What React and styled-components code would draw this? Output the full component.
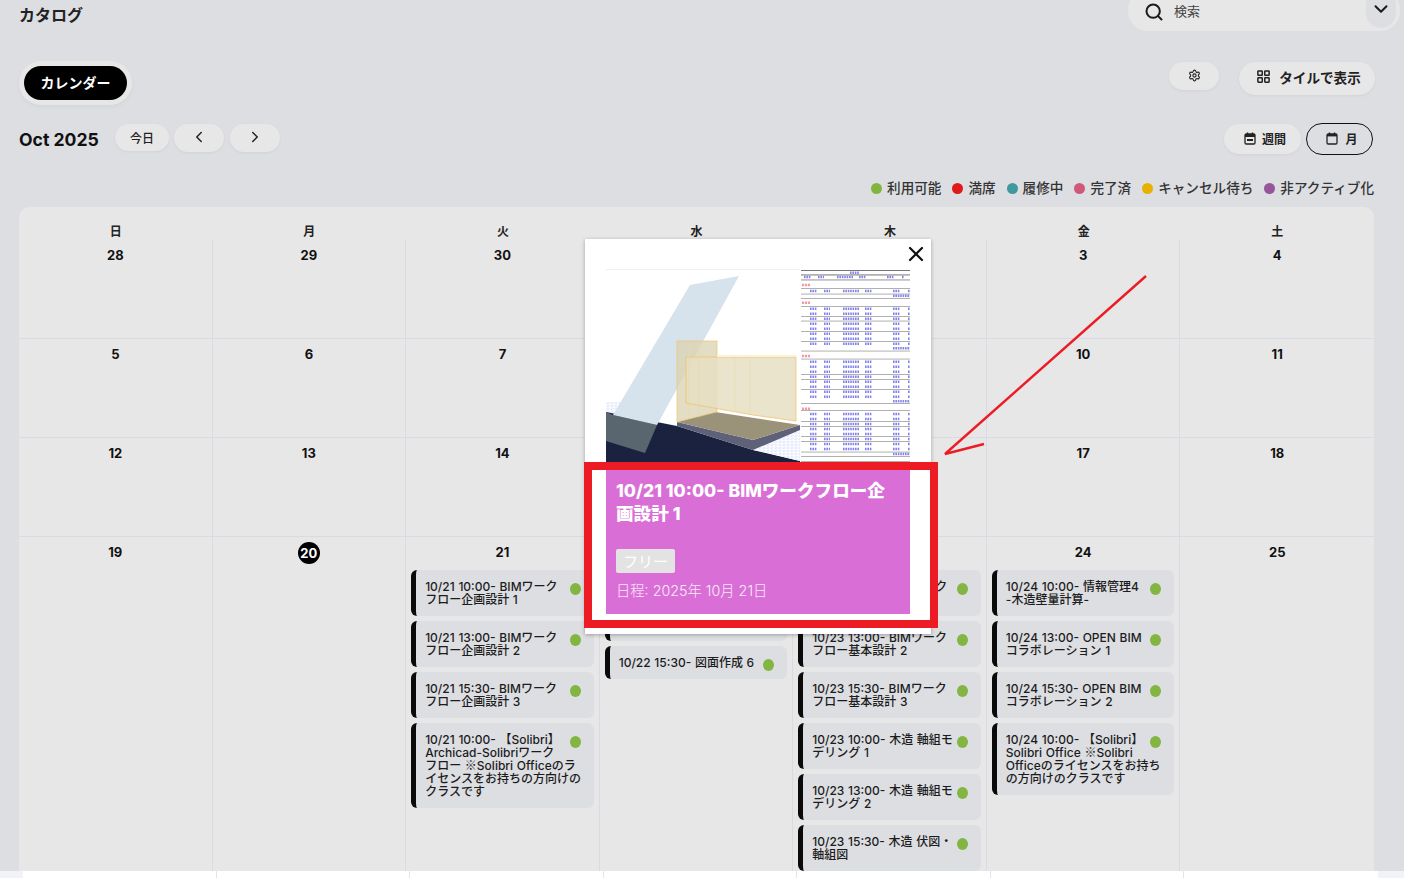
import React from 'react'
import styled, { createGlobalStyle } from 'styled-components'
import { Search, ChevronDown, ChevronLeft, ChevronRight, Settings, LayoutGrid, X } from 'lucide-react'

const GlobalStyle = createGlobalStyle`
    html, body {
        margin: 0;
        padding: 0;
        height: 100%;
        overflow: hidden;
        background: #dddee2;
    }
    * {
        box-sizing: border-box;
    }
    body {
        font-family: Inter, "Noto Sans CJK JP", sans-serif;
        color: #111;
    }
`

const LEGEND = [
    { label: '利用可能', color: '#84b440' },
    { label: '満席', color: '#e0191a' },
    { label: '履修中', color: '#3f9a9e' },
    { label: '完了済', color: '#cf5a78' },
    { label: 'キャンセル待ち', color: '#eab000' },
    { label: '非アクティブ化', color: '#96569b' },
]

const WEEKDAYS = ['日', '月', '火', '水', '木', '金', '土']

const WEEKS = [
    [28, 29, 30, 1, 2, 3, 4],
    [5, 6, 7, 8, 9, 10, 11],
    [12, 13, 14, 15, 16, 17, 18],
    [19, 20, 21, 22, 23, 24, 25],
]

const EVENTS = {
    21: [
        '10/21 10:00- BIMワークフロー企画設計 1',
        '10/21 13:00- BIMワークフロー企画設計 2',
        '10/21 15:30- BIMワークフロー企画設計 3',
        '10/21 10:00- 【Solibri】Archicad-Solibriワーク\nフロー ※Solibri Officeのライセンスをお持ちの方向けのクラスです',
    ],
    22: [
        '10/22 10:00- 図面作成 4',
        '10/22 13:00- 図面作成 5',
        '10/22 15:30- 図面作成 6',
    ],
    23: [
        '10/23 10:00- BIMワークフロー基本設計 1',
        '10/23 13:00- BIMワークフロー基本設計 2',
        '10/23 15:30- BIMワークフロー基本設計 3',
        '10/23 10:00- 木造 軸組モデリング 1',
        '10/23 13:00- 木造 軸組モデリング 2',
        '10/23 15:30- 木造 伏図・軸組図',
    ],
    24: [
        '10/24 10:00- 情報管理4 -木造壁量計算-',
        '10/24 13:00- OPEN BIMコラボレーション 1',
        '10/24 15:30- OPEN BIMコラボレーション 2',
        '10/24 10:00- 【Solibri】Solibri Office ※Solibri Officeのライセンスをお持ちの方向けのクラスです',
    ],
}

// rows of the takeoff sheet in the picture: y of each row, illegible at this size
const sheetRows = (start, count) => Array.from({ length: count }, (_, i) => start + i * 5)
const SHEET_GROUPS = [
    { label: 15, rows: sheetRows(22, 1), lines: [19.3, 24.7, 29.3], total: 26.7 },
    { label: 32.7, rows: sheetRows(39.7, 8), lines: [37, 47, 51.7, 62, 72, 81.7], total: 79.3 },
    { label: 86, rows: sheetRows(92.7, 8), lines: [89.7, 105, 110, 120, 134], total: 132.3 },
    { label: 138.7, rows: sheetRows(145, 8), lines: [141.3, 152, 157, 167, 172, 182.7, 187.3, 192], total: 185 },
]
const SHEET_COLS = [[204, 7], [218, 6], [237, 16], [259, 7], [287, 7], [302, 2]]

function BuildingPicture() {
    return (
        <svg width="304" height="193" viewBox="0 0 304 193">
            <defs>
                <pattern id="ground" width="4" height="3" patternUnits="userSpaceOnUse">
                    <rect width="4" height="3" fill="#fff" />
                    <path d="M0 2.5 L4 1.5 M2 0 L2 3" stroke="#d5dcfa" strokeWidth="0.6" />
                </pattern>
            </defs>
            <rect x="0" y="0" width="194" height="0.8" fill="#eee" />
            <polygon points="0,133 16,133 8,146 0,146" fill="url(#ground)" />
            <polygon points="0,143 71,157 147,181 194,192 194,193 0,193" fill="#1a2240" />
            <polygon points="147,181 194,161 194,192" fill="url(#ground)" />
            <polygon points="0,143 7,146 51,156 39,184 0,172" fill="#5a666f" />
            <polygon points="84,16 133,7 51,156 7,146" fill="#d6e2ec" />
            <polygon points="71,153 147,171 194,156 194,161 147,181 71,157" fill="#5e6178" />
            <polygon points="71,153 109,143 194,156 147,171" fill="#9a9279" />
            <polygon points="71,72 111,72 111,143 71,153" fill="#dcd4b4" fillOpacity="0.8" stroke="#eec36a" strokeWidth="0.7" />
            <polygon points="80,88 190,88 190,152 147,146 80,134" fill="#e6dfc4" fillOpacity="0.85" stroke="#efc468" strokeWidth="0.8" />
            <path d="M83 72 V150 M93 72 V148 M129 88 V143 M144 88 V146" stroke="#e8d9a8" strokeWidth="0.6" />
            <polygon points="111,86 190,86 190,88 111,88" fill="#f9f2d4" />
            <rect x="195" y="0" width="109" height="193" fill="#fff" />
            <rect x="195" y="1" width="109" height="0.9" fill="#666" />
            <rect x="195" y="5.5" width="109" height="0.9" fill="#666" />
            <rect x="195" y="10.5" width="109" height="0.9" fill="#888" />
            <SheetText x={244} y={3.7} w={9} />
            {SHEET_COLS.map(([x, w]) => (
                <SheetText key={x} x={x - 6} y={8} w={w} />
            ))}
            {SHEET_GROUPS.map((group) => (
                <g key={group.label}>
                    <line x1="196" x2="204" y1={group.label + 1} y2={group.label + 1} stroke="#f29aa8" strokeWidth="2.6" strokeDasharray="2.2 0.8" />
                    {group.lines.map((y) => (
                        <rect key={y} x="195" y={y} width="109" height="0.7" fill="#8f8f8f" />
                    ))}
                    {group.rows.map((y) =>
                        SHEET_COLS.map(([x, w]) => (
                            <SheetText key={`${y}-${x}`} x={x} y={y} w={w} />
                        ))
                    )}
                    <SheetText x={287} y={group.total} w={17} />
                </g>
            ))}
        </svg>
    )
}

function SheetText({ x, y, w }) {
    return <line x1={x} x2={x + w} y1={y} y2={y} stroke="#8383ee" strokeWidth="2.4" strokeDasharray="1.6 0.8" />
}

function WeekIcon() {
    return (
        <svg width="12" height="13" viewBox="0 0 12 13">
            <path d="M3.5 0.5 V3 M8.5 0.5 V3" stroke="#222" strokeWidth="1.4" />
            <rect x="1" y="2" width="10" height="10" rx="1.2" fill="none" stroke="#222" strokeWidth="1.3" />
            <rect x="1" y="2" width="10" height="3" fill="#222" />
            <rect x="3" y="7" width="6" height="2" fill="#222" />
        </svg>
    )
}

function MonthIcon() {
    return (
        <svg width="12" height="13" viewBox="0 0 12 13">
            <path d="M3.5 0.5 V3 M8.5 0.5 V3" stroke="#222" strokeWidth="1.4" />
            <rect x="1" y="2" width="10" height="10" rx="1.2" fill="none" stroke="#222" strokeWidth="1.3" />
            <rect x="1" y="2" width="10" height="2.4" fill="#222" />
        </svg>
    )
}

// Inter has its own narrow ※, the reference shows the CJK one
function EventTitle({ text }) {
    const parts = text.split('※')
    if (parts.length === 1) {
        return text
    }
    return (
        <>
            {parts[0]}
            <RefMark>※</RefMark>
            {parts[1]}
        </>
    )
}

export default function App() {
    return (
        <Page>
            <GlobalStyle />

            <TopBar>
                <PageTitle>カタログ</PageTitle>
                <SearchBox>
                    <Search size={20} strokeWidth={2.4} color="#1a1a1a" />
                    <SearchLabel>検索</SearchLabel>
                    <SearchToggle>
                        <ChevronDown size={22} strokeWidth={2.2} color="#1a1a1a" />
                    </SearchToggle>
                </SearchBox>
            </TopBar>

            <TabRow>
                <TabTrack>
                    <ActiveTab>カレンダー</ActiveTab>
                </TabTrack>
                <Actions>
                    <SoftButton $width={50} $height={28} $lift={2}>
                        <Settings size={13} strokeWidth={2} color="#222" />
                    </SoftButton>
                    <SoftButton $width={136} $height={33} $size={13.6} $weight={600} $gap={8} $lift={4} $indent={3}>
                        <LayoutGrid size={15} strokeWidth={2.4} color="#222" />
                        タイルで表示
                    </SoftButton>
                </Actions>
            </TabRow>

            <Toolbar>
                <MonthNav>
                    <MonthLabel>Oct 2025</MonthLabel>
                    <SoftButton $width={54} $height={27} $size={12}>今日</SoftButton>
                    <NavGroup>
                        <SoftButton $width={50} $height={28} $lift={2}>
                            <ChevronLeft size={18} strokeWidth={2} color="#222" />
                        </SoftButton>
                        <SoftButton $width={50} $height={28} $lift={2}>
                            <ChevronRight size={18} strokeWidth={2} color="#222" />
                        </SoftButton>
                    </NavGroup>
                </MonthNav>
                <ViewSwitch>
                    <SoftButton $width={77} $height={30} $size={12} $weight={600} $gap={6} $lift={2} $indent={5}>
                        <WeekIcon />
                        週間
                    </SoftButton>
                    <OutlineButton>
                        <MonthIcon />
                        月
                    </OutlineButton>
                </ViewSwitch>
            </Toolbar>

            <Legend>
                {LEGEND.map((item) => (
                    <LegendItem key={item.label}>
                        <LegendDot $color={item.color} />
                        {item.label}
                    </LegendItem>
                ))}
            </Legend>

            <CalendarPanel>
                <WeekHeader>
                    {WEEKDAYS.map((day) => (
                        <WeekdayCell key={day}>{day}</WeekdayCell>
                    ))}
                </WeekHeader>
                <WeekGrid>
                    {WEEKS.flat().map((date, index) => (
                        <DayCell key={index} $lastCol={index % 7 === 6} $lastRow={index >= 21}>
                            <DateNumber $today={date === 20}>{date}</DateNumber>
                            {index >= 21 && EVENTS[date] && (
                                <EventList>
                                    {EVENTS[date].map((title) => (
                                        <EventCard key={title}>
                                            <EventDot />
                                            <EventTitle text={title} />
                                        </EventCard>
                                    ))}
                                </EventList>
                            )}
                        </DayCell>
                    ))}
                </WeekGrid>
            </CalendarPanel>

            <BottomStrip>
                <StripGrid>
                    {WEEKDAYS.map((day) => (
                        <StripCell key={day} />
                    ))}
                </StripGrid>
            </BottomStrip>

            <Modal>
                <CloseButton>
                    <X size={24} strokeWidth={2.2} color="#111" />
                </CloseButton>
                <ModalPicture>
                    <BuildingPicture />
                </ModalPicture>
                <ModalInfo>
                    <ModalTitle>10/21 10:00- BIMワークフロー企画設計 1</ModalTitle>
                    <PriceTag>フリー</PriceTag>
                    <ModalDate>日程: 2025年 10月 21日</ModalDate>
                </ModalInfo>
            </Modal>

            <Highlight />

            <Arrow width="210" height="185" viewBox="0 0 210 185">
                <path d="M205 2 L4 180 L43 170" fill="none" stroke="#ed1c24" strokeWidth="2.4" strokeLinejoin="miter" />
            </Arrow>
        </Page>
    )
}

const Page = styled.div`
    position: relative;
    width: 1404px;
    height: 878px;
    overflow: hidden;
    background: #dddee2;
`

const TopBar = styled.header`
    display: flex;
    justify-content: space-between;
    align-items: flex-start;
    height: 31px;
    padding: 0 4px 0 19px;
`

const PageTitle = styled.h1`
    margin: 0;
    font-size: 16px;
    line-height: 30px;
    font-weight: 700;
    color: #222;
`

const SearchBox = styled.div`
    display: flex;
    align-items: center;
    width: 272px;
    height: 41px;
    margin-top: -10px;
    padding: 2px 4px 0 16px;
    border-radius: 20px;
    background: #e7e7e7;
`

const SearchLabel = styled.span`
    flex: 1;
    margin: 0 0 2px 10px;
    font-size: 13px;
    color: #444;
`

const SearchToggle = styled.div`
    display: flex;
    align-items: center;
    justify-content: center;
    width: 30px;
    height: 38px;
    margin-top: -5px;
    border-radius: 15px;
    background: #dddee2;
`

const TabRow = styled.div`
    display: flex;
    justify-content: space-between;
    align-items: flex-start;
    height: 44px;
    margin-top: 30px;
    padding: 0 29px 0 19px;
`

const TabTrack = styled.div`
    display: flex;
    padding: 5px;
    border-radius: 22px;
    background: #e7e7e7;
    box-shadow: 0 2px 4px rgba(0, 0, 0, 0.04);
`

const ActiveTab = styled.div`
    display: flex;
    align-items: center;
    justify-content: center;
    width: 103px;
    height: 34px;
    padding-bottom: 2px;
    border-radius: 17px;
    background: #000;
    color: #fff;
    font-size: 14px;
    font-weight: 700;
`

const Actions = styled.div`
    display: flex;
    align-items: flex-start;
    gap: 20px;
    margin-top: 1px;
`

const SoftButton = styled.div`
    display: flex;
    align-items: center;
    justify-content: center;
    gap: ${(p) => p.$gap || 0}px;
    width: ${(p) => p.$width}px;
    height: ${(p) => p.$height}px;
    padding-bottom: ${(p) => p.$lift || 0}px;
    padding-left: ${(p) => p.$indent || 0}px;
    border-radius: ${(p) => p.$height / 2}px;
    background: #e7e7e7;
    box-shadow: 0 1px 3px rgba(0, 0, 0, 0.05);
    font-size: ${(p) => p.$size || 13}px;
    font-weight: ${(p) => p.$weight || 500};
    color: #222;
`

const OutlineButton = styled.div`
    display: flex;
    align-items: center;
    justify-content: center;
    gap: 7px;
    width: 67px;
    height: 32px;
    padding: 0 0 2px 5px;
    border: 1.5px solid #111;
    border-radius: 16px;
    font-size: 12px;
    font-weight: 600;
    color: #222;
`

const Toolbar = styled.div`
    display: flex;
    justify-content: space-between;
    align-items: flex-start;
    height: 32px;
    margin-top: 18px;
    padding: 0 31px 0 19px;
`

const MonthNav = styled.div`
    display: flex;
    align-items: flex-start;
    margin-top: 1px;
`

const MonthLabel = styled.h2`
    width: 96px;
    margin: 0;
    font-size: 17.6px;
    line-height: 32px;
    font-weight: 700;
    color: #111;
    white-space: nowrap;
`

const NavGroup = styled.div`
    display: flex;
    gap: 6px;
    margin-left: 5px;
`

const ViewSwitch = styled.div`
    display: flex;
    align-items: center;
    gap: 5px;
`

const Legend = styled.div`
    display: flex;
    justify-content: flex-end;
    gap: 11px;
    height: 16px;
    margin-top: 25px;
    padding-right: 30px;
`

const LegendItem = styled.div`
    display: flex;
    align-items: center;
    gap: 5px;
    font-size: 13.6px;
    line-height: 16px;
    font-weight: 500;
    color: #333;
    white-space: nowrap;
`

const LegendDot = styled.span`
    width: 11px;
    height: 11px;
    border-radius: 50%;
    background: ${(p) => p.$color};
`

const CalendarPanel = styled.section`
    display: flex;
    flex-direction: column;
    width: 1355px;
    height: 664px;
    margin: 11px 0 0 19px;
    border-radius: 10px 10px 0 0;
    background: #e7e7e7;
    overflow: hidden;
`

const WeekHeader = styled.div`
    display: grid;
    grid-template-columns: repeat(7, 1fr);
    height: 33px;
`

const WeekdayCell = styled.div`
    display: flex;
    align-items: flex-end;
    justify-content: center;
    padding-bottom: 1px;
    font-size: 12px;
    line-height: 14px;
    font-weight: 600;
    color: #222;
`

const WeekGrid = styled.div`
    flex: 1;
    min-height: 0;
    display: grid;
    grid-template-columns: repeat(7, minmax(0, 1fr));
    grid-template-rows: 99px 99px 99px minmax(0, 1fr);
`

const DayCell = styled.div`
    min-height: 0;
    padding: 4px 5px 0 5px;
    border-right: ${(p) => (p.$lastCol ? 'none' : '1px solid #d9dae4')};
    border-bottom: ${(p) => (p.$lastRow ? 'none' : '1px solid #d9dae4')};
`

const DateNumber = styled.div`
    position: relative;
    top: ${(p) => (p.$today ? '1px' : '0')};
    display: flex;
    align-items: center;
    justify-content: center;
    width: ${(p) => (p.$today ? '22px' : 'auto')};
    height: 22px;
    margin: 0 auto;
    border-radius: 50%;
    background: ${(p) => (p.$today ? '#000' : 'transparent')};
    color: ${(p) => (p.$today ? '#fff' : '#111')};
    font-size: 13px;
    font-weight: 700;
`

const EventList = styled.div`
    margin-top: 7px;
`

const EventCard = styled.div`
    margin-bottom: 5px;
    padding: 10px 12px 10px 9px;
    border-left: 5px solid #0a0a0a;
    border-radius: 6px;
    background: #dddee2;
    font-size: 12px;
    line-height: 13px;
    word-spacing: 0.5px;
    white-space: pre-line;
    font-weight: 500;
    color: #1c1c1c;
`

const EventDot = styled.span`
    float: right;
    width: 11px;
    height: 12px;
    margin: 3px 1px 11px 3px;
    border-radius: 50%;
    background: #82b541;
`

const RefMark = styled.span`
    font-family: "Noto Sans CJK JP", sans-serif;
    line-height: 0;
`

const BottomStrip = styled.div`
    height: 7px;
    background: #f2f3f7;
    padding: 0 26px 0 23px;
`

const StripGrid = styled.div`
    display: grid;
    grid-template-columns: repeat(7, 1fr);
    height: 100%;
    background: #fff;
`

const StripCell = styled.div`
    border-right: 1px solid #e3e3e8;

    &:last-child {
        border-right: none;
    }
`

const Modal = styled.div`
    position: absolute;
    left: 585px;
    top: 239px;
    width: 346px;
    height: 395px;
    padding: 30px 21px 0 21px;
    background: #fff;
    box-shadow: 0 1px 4px rgba(0, 0, 0, 0.3);
`

const CloseButton = styled.div`
    position: absolute;
    top: 3px;
    right: 3px;
    display: flex;
`

const ModalPicture = styled.div`
    display: flex;
    height: 193px;
`

const ModalInfo = styled.div`
    height: 144px;
    margin-top: 8px;
    padding: 9px 10px;
    background: #d96fd6;
    color: #fff;
`

const ModalTitle = styled.h3`
    margin: 0;
    font-size: 17.6px;
    line-height: 23px;
    font-weight: 800;
`

const PriceTag = styled.div`
    display: flex;
    align-items: center;
    justify-content: center;
    width: 59px;
    height: 24px;
    margin-top: 24px;
    padding-bottom: 2px;
    border-radius: 2px;
    background: #e3e3e3;
    color: #fff;
    font-size: 15px;
`

const ModalDate = styled.div`
    margin-top: 8px;
    font-size: 14.3px;
    line-height: 20px;
    font-weight: 300;
    color: #fbe9fa;
`

const Highlight = styled.div`
    position: absolute;
    left: 584px;
    top: 462px;
    width: 354px;
    height: 166px;
    border: 8px solid #ed1c24;
    pointer-events: none;
`

const Arrow = styled.svg`
    position: absolute;
    left: 941px;
    top: 274px;
    pointer-events: none;
`
